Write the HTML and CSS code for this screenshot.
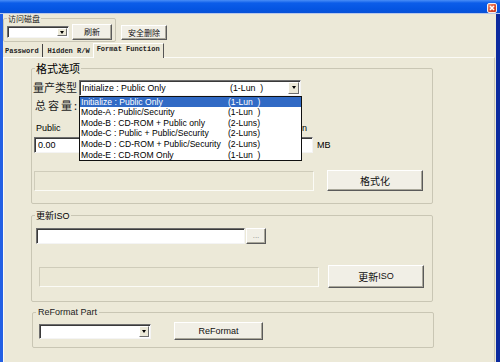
FILE: index.html
```html
<!DOCTYPE html>
<html>
<head>
<meta charset="utf-8">
<link rel="stylesheet" href="styles.css">
</head>
<body>
<div class="win">
  <div class="title">
    <span class="close"><svg width="10" height="10" viewBox="0 0 10 10"><path d="M3 3 L7 7 M7 3 L3 7" stroke="#fff" stroke-width="1.6"/></svg></span>
  </div>
  <div class="frame">
    <div class="client">
      <div class="toprow">
        <div class="group g0">
          <span class="legend small-cjk">访问磁盘</span>
          <div class="g0row">
            <div class="combo c0"><span class="arrow"><i></i></span></div>
            <div class="btn b-refresh small-cjk">刷新</div>
          </div>
        </div>
        <div class="btn b-del small-cjk">安全删除</div>
      </div>
      <div class="tabs">
        <div class="tab t1">Password</div>
        <div class="tab t2">Hidden R/W</div>
        <div class="tab t3 sel">Format Function</div>
      </div>
      <div class="panel">
        <div class="group g1">
          <span class="legend cjk">格式选项</span>
          <div class="row r1">
            <span class="lbl cjk l-type">量产类型</span>
            <div class="combo c1">
              <span class="ctext">Initialize : Public Only</span><span class="cright">(1-Lun&nbsp;&nbsp;)</span>
              <span class="arrow"><i></i></span>
              <div class="list">
                <div class="item hl"><span>Initialize : Public Only</span><span>(1-Lun&nbsp;&nbsp;)</span></div>
                <div class="item"><span>Mode-A : Public/Security</span><span>(1-Lun&nbsp;&nbsp;)</span></div>
                <div class="item"><span>Mode-B : CD-ROM + Public only</span><span>(2-Luns)</span></div>
                <div class="item"><span>Mode-C : Public + Public/Security</span><span>(2-Luns)</span></div>
                <div class="item"><span>Mode-D : CD-ROM + Public/Security</span><span>(2-Luns)</span></div>
                <div class="item"><span>Mode-E : CD-ROM Only</span><span>(1-Lun&nbsp;&nbsp;)</span></div>
              </div>
            </div>
          </div>
          <div class="row r2"><span class="lbl cjk l-cap">总容量:</span></div>
          <div class="row r3"><span class="lat">Public</span><span class="lat">Partition</span></div>
          <div class="row r4">
            <div class="input i-pub lat">0.00</div>
            <div class="input i-sec"></div>
            <span class="lat mb">MB</span>
          </div>
          <div class="row r5">
            <div class="progress p1"></div>
            <div class="btn b-fmt cjk10">格式化</div>
          </div>
        </div>
        <div class="group g2">
          <span class="legend cjk9">更新<span class="lat">ISO</span></span>
          <div class="row r6">
            <div class="input i-iso"></div>
            <div class="btn b-dots">...</div>
          </div>
          <div class="row r7">
            <div class="progress p2"></div>
            <div class="btn b-iso cjk10">更新<span class="lat">ISO</span></div>
          </div>
        </div>
        <div class="group g3">
          <span class="legend lat">ReFormat Part</span>
          <div class="row r8">
            <div class="combo c3"><span class="arrow"><i></i></span></div>
            <div class="btn b-ref lat">ReFormat</div>
          </div>
        </div>
      </div>
    </div>
  </div>
</div>
</body>
</html>
```
FILE: styles.css
```css
* { box-sizing: border-box; }
html, body { margin: 0; padding: 0; }
body {
  width: 500px;
  height: 362px;
  overflow: hidden;
  background: #ece9d8;
  font-family: "Liberation Sans", Arial, sans-serif;
  color: #000;
}
.win {
  width: 500px;
  height: 362px;
  display: flex;
  flex-direction: column;
  background: #ece9d8;
}
.title {
  height: 14px;
  flex: none;
  background: linear-gradient(#4a8ef7 0, #0c5de9 3px, #0555e2 9px, #0a52d6 13px);
  border-bottom: 1px solid #b9c8ea;
  display: flex;
  justify-content: flex-end;
  align-items: flex-start;
  padding: 3px 3px 0 0;
}
.close {
  width: 10px;
  height: 10px;
  display: block;
  background: linear-gradient(135deg, #f09a80, #d9492a 60%, #c13a1e);
  border: 1px solid #f4f0ef;
  border-radius: 2px;
}
.close svg { display: block; margin: -1px; }
.frame {
  flex: 1;
  display: flex;
  border-left: 3px solid #2360e4;
  border-right: 4px solid #0b2a9e;
  min-height: 0;
}
.client {
  flex: 1;
  display: flex;
  flex-direction: column;
  min-width: 0;
}
.cjk { font-family: "Noto Sans CJK SC", sans-serif; font-size: 11px; }
.cjk10 { font-family: "Noto Sans CJK SC", sans-serif; font-size: 10px; }
.cjk9 { font-family: "Noto Sans CJK SC", sans-serif; font-size: 9px; }
.small-cjk { font-family: "Noto Sans CJK SC", sans-serif; font-size: 8px; }
.lat { font-family: "Liberation Sans", Arial, sans-serif; font-size: 9px; }

/* top */
.toprow {
  display: flex;
  align-items: flex-start;
  margin-top: 4px;
  height: 24px;
}
.group {
  border: 1px solid #c9c6b4;
  border-radius: 2px;
}
.legend {
  display: block;
  width: max-content;
  background: #ece9d8;
  padding: 0 1px;
  white-space: nowrap;
}
.g0 { width: 113px; height: 24px; }
.g0 .legend { line-height: 10px; margin: -5px 0 0 3px; color: #222; }
.g0row { display: flex; align-items: center; height: 16px; }
.c0 { width: 62px; height: 12px; margin-left: 3px; }
.b-refresh { width: 40px; height: 16px; margin-left: 3px; }
.b-del { width: 46px; height: 15px; margin: 7px 0 0 5px; }

/* combo */
.combo {
  position: relative;
  background: #fff;
  border: 1px solid;
  border-color: #6e6e6e #f4f4f4 #f4f4f4 #6e6e6e;
  box-shadow: inset 1px 1px 0 #3a3a3a;
  display: flex;
  align-items: center;
}
.arrow {
  position: absolute;
  right: 1px;
  top: 1px;
  bottom: 1px;
  width: 10px;
  background: #ece9d8;
  border: 1px solid;
  border-color: #fff #6e6e6e #6e6e6e #fff;
  display: flex;
  align-items: center;
  justify-content: center;
}
.arrow i {
  display: block;
  width: 0;
  height: 0;
  border-left: 2.5px solid transparent;
  border-right: 2.5px solid transparent;
  border-top: 3px solid #000;
}

/* buttons */
.btn {
  background: #f1efe6;
  border: 1px solid;
  border-color: #fff #5a5a5a #5a5a5a #fff;
  box-shadow: inset -1px -1px 0 #a9a79a;
  display: flex;
  align-items: center;
  justify-content: center;
  color: #111;
  line-height: 1;
  white-space: nowrap;
}

/* tabs */
.tabs {
  display: flex;
  height: 13px;
  margin-top: 2px;
  align-items: flex-end;
  font-family: "Liberation Mono", "Courier New", monospace;
  font-size: 7px;
  font-weight: bold;
  position: relative;
  z-index: 1;
}
.tab {
  height: 13px;
  line-height: 12px;
  padding-top: 1px;
  white-space: nowrap;
  color: #222;
}
.t1 { padding-left: 2px; padding-right: 3px; border-right: 1px solid #444; }
.t2 { padding-left: 5px; padding-right: 2px; }
.t3 {
  padding: 0 3px 0 3px;
  height: 15px;
  margin-bottom: -1px;
  line-height: 11px;
  background: #ece9d8;
  border-left: 1px solid #fff;
  border-top: 1px solid #fff;
  border-right: 1px solid #555;
  margin-left: 1px;
}

/* panel */
.panel {
  flex: 1;
  border-top: 1px solid #fbfbf6;
  border-left: 1px solid #fbfbf6;
  border-right: 1px solid #c9c6b4;
  margin-right: 1px;
  display: flex;
  flex-direction: column;
}
.g1, .g2, .g3 { width: 402px; }
.g1 { margin: 10px 0 0 27px; padding-bottom: 12px; }
.g1 > .legend, .g2 > .legend, .g3 > .legend { line-height: 13px; margin: -7px 0 0 3px; }
.row { display: flex; }
.r1 { margin-top: 5px; height: 15px; align-items: center; }
.l-type { width: 47px; padding-left: 1px; line-height: 15px; color: #222; }
.c1 { width: 222px; height: 16px; font-size: 8.8px; }
.ctext { position: absolute; left: 2px; top: 2px; line-height: 11px; }
.cright { position: absolute; left: 150px; top: 2px; line-height: 11px; }
.c1 .arrow { width: 11px; }
.list {
  position: absolute;
  left: -1px;
  top: 15px;
  width: 223px;
  border: 1px solid #111;
  background: #fff;
  z-index: 5;
  font-size: 8.6px;
}
.item {
  display: grid;
  grid-template-columns: 147px 1fr;
  height: 10.67px;
  line-height: 10.67px;
  padding-left: 1px;
  white-space: nowrap;
}
.item.hl { background: #316ac5; color: #fff; }
.r2 { margin-top: 3px; height: 15px; }
.l-cap { padding-left: 3px; line-height: 15px; letter-spacing: 2px; color: #222; }
.r3 {
  margin-top: 9px;
  height: 13px;
  line-height: 13px;
  width: 275px;
  justify-content: space-between;
  padding-left: 4px;
}
.r4 { margin-top: 2px; height: 16px; align-items: center; }
.input {
  height: 16px;
  background: #fff;
  border: 1px solid;
  border-color: #6e6e6e #f4f4f4 #f4f4f4 #6e6e6e;
  box-shadow: inset 1px 1px 0 #3a3a3a;
}
.i-pub { width: 116px; margin-left: 2px; padding: 2px 0 0 3px; line-height: 11px; }
.i-sec { width: 113px; margin-left: 50px; }
.mb { margin-left: 4px; }
.r5 { margin-top: 17px; height: 21px; align-items: flex-start; }
.progress {
  height: 20px;
  width: 280px;
  border: 1px solid;
  border-color: #cfccba #fbfbf6 #fbfbf6 #cfccba;
  background: #ebe8d6;
}
.p1 { margin: 1px 0 0 2px; }
.b-fmt { width: 96px; height: 21px; margin-left: 13px; }

.g2 { margin: 11px 0 0 27px; padding-bottom: 13px; }
.r6 { margin-top: 5px; height: 16px; }
.i-iso { width: 209px; margin-left: 4px; }
.b-dots { width: 20px; height: 16px; font-size: 8px; color: #888; margin-left: 1px; }
.r7 { margin-top: 21px; height: 23px; align-items: flex-start; }
.p2 { margin: 2px 0 0 7px; }
.b-iso { width: 96px; height: 23px; margin-left: 9px; }
.b-iso .lat { font-size: 9px; }

.g3 { margin: 10px 0 0 28px; padding-bottom: 7px; }
.g3 > .legend { color: #222; padding: 0 2px; }
.r8 { margin-top: 3px; height: 18px; align-items: flex-start; }
.c3 { width: 112px; height: 15px; margin: 2px 0 0 6px; }
.b-ref { width: 89px; height: 18px; margin-left: 23px; }
```
